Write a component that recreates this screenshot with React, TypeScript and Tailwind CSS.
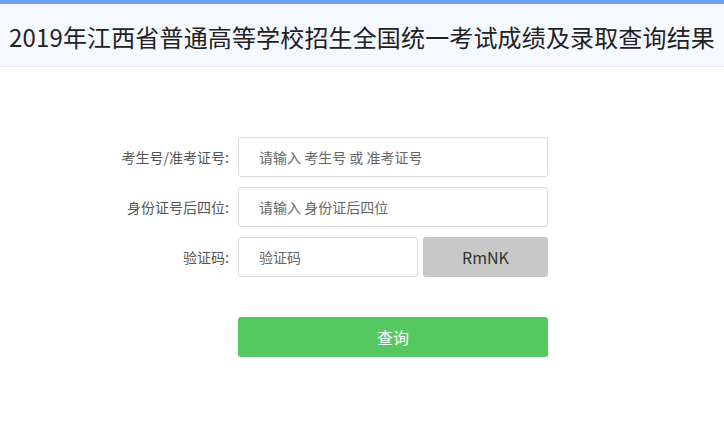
import React from "react";

const font = { fontFamily: '"Noto Sans CJK SC", "Noto Sans", sans-serif' };

function Row({ label, children }: { label: string; children: React.ReactNode }) {
  return (
    <div className="flex items-center h-[40px]">
      <div className="w-[130px] pr-[9px] text-right text-[14px] text-[#555]">{label}</div>
      {children}
    </div>
  );
}

export default function App() {
  return (
    <div className="w-[724px] h-[435px] bg-white" style={font}>
      <div className="h-[4px] bg-[#6a9ef7]" />
      <div className="h-[63px] bg-[#f5f9ff] border-b border-[#e3e8ef] flex items-center justify-center">
        <h1 className="text-[24px] text-[#222] leading-none pt-[4px] tracking-[0.15px]">
          2019年江西省普通高等学校招生全国统一考试成绩及录取查询结果
        </h1>
      </div>
      <div className="pl-[108px] pt-[70px] flex flex-col gap-[10px]">
        <Row label="考生号/准考证号:">
          <input
            className="w-[310px] h-[40px] border border-[#dcdcdc] rounded-[3px] pl-[20px] text-[14px] text-[#555] placeholder:text-[#666] outline-none"
            placeholder="请输入 考生号 或 准考证号"
          />
        </Row>
        <Row label="身份证号后四位:">
          <input
            className="w-[310px] h-[40px] border border-[#dcdcdc] rounded-[3px] pl-[20px] text-[14px] text-[#555] placeholder:text-[#666] outline-none"
            placeholder="请输入 身份证后四位"
          />
        </Row>
        <Row label="验证码:">
          <div className="flex gap-[5px]">
            <input
              className="w-[180px] h-[40px] border border-[#dcdcdc] rounded-[3px] pl-[20px] text-[14px] text-[#555] placeholder:text-[#666] outline-none"
              placeholder="验证码"
            />
            <div className="w-[125px] h-[40px] bg-[#c8c8c8] rounded-[3px] flex items-center justify-center text-[16px] text-[#333]">
              RmNK
            </div>
          </div>
        </Row>
        <div className="pl-[130px] pt-[30px]">
          <button className="w-[310px] h-[40px] bg-[#55c95f] rounded-[3px] text-white text-[16px]">
            查询
          </button>
        </div>
      </div>
    </div>
  );
}
